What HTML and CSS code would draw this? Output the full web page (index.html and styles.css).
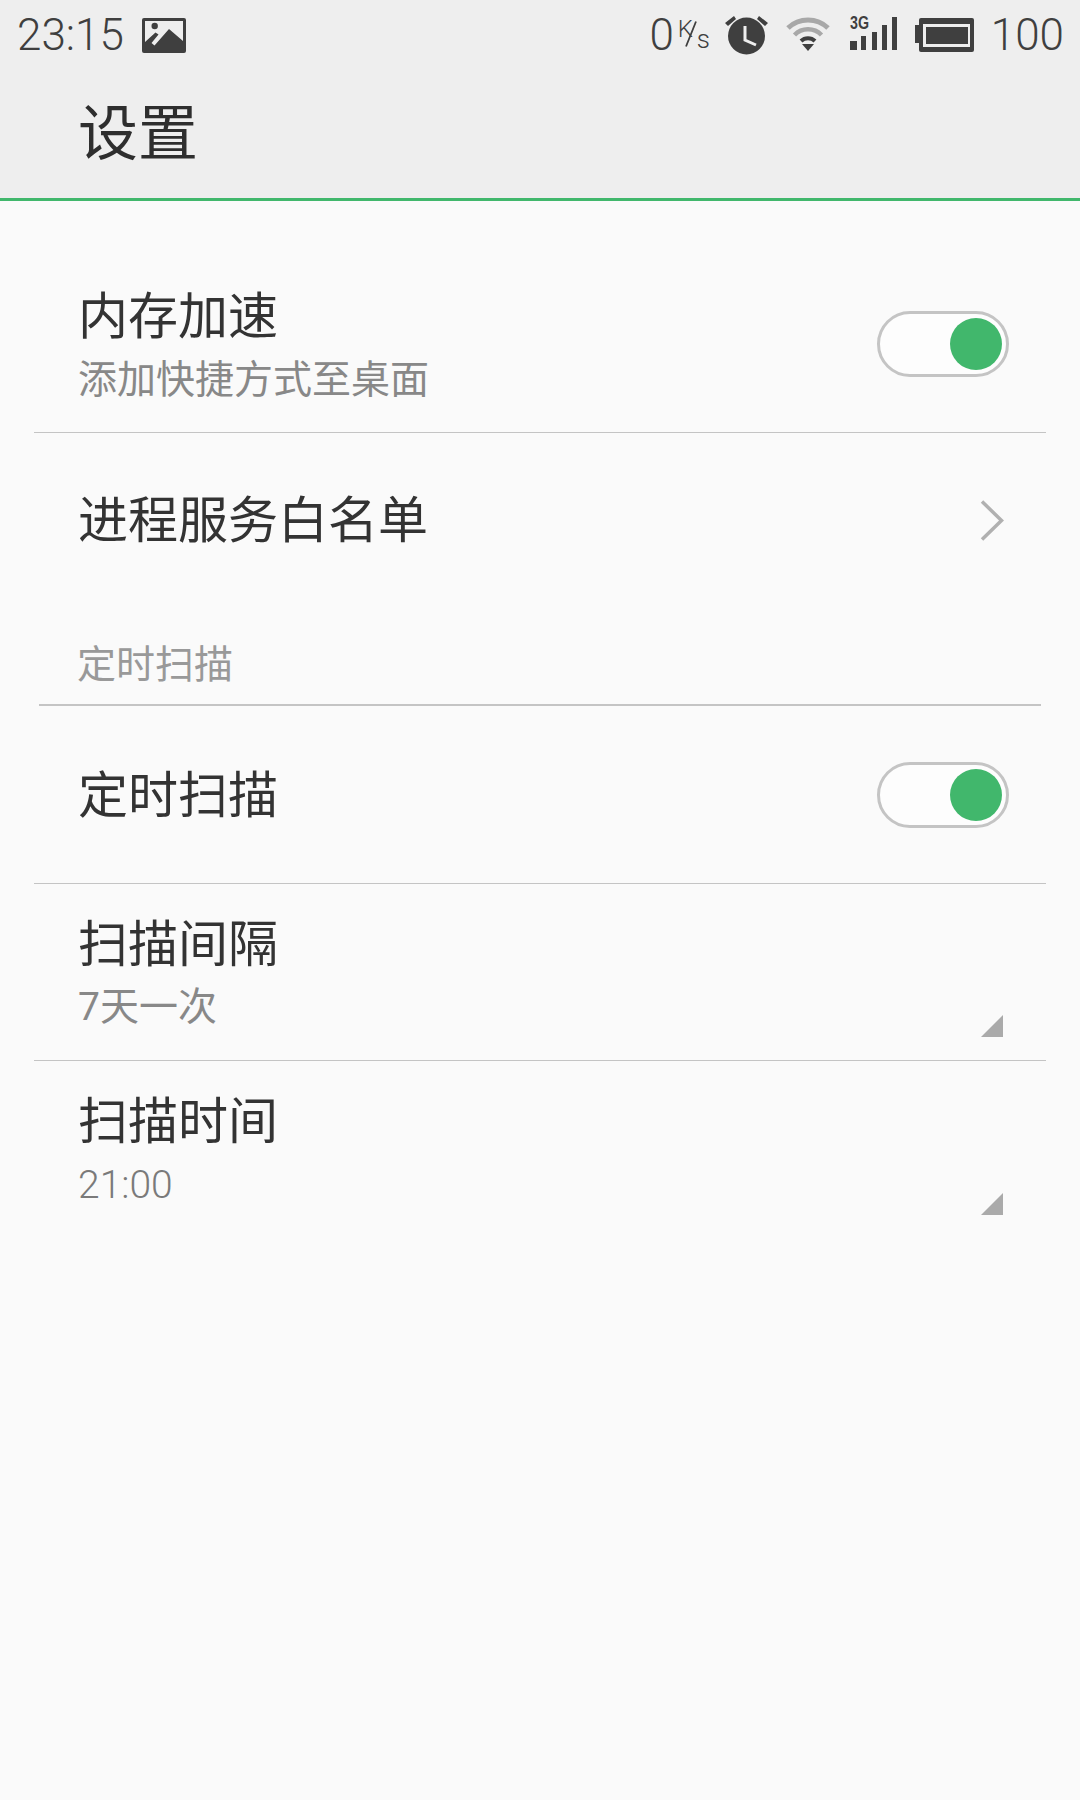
FILE: index.html
```html
<!DOCTYPE html>
<html lang="zh-CN">
<head>
<meta charset="utf-8">
<title>设置</title>
<link rel="stylesheet" href="styles.css">
</head>
<body>
<header class="appbar">
  <div class="status">
    <div class="status-left">
      <span class="clock">23:15</span>
      <svg class="ic-image" viewBox="0 0 44 35"><path fill="#3f3f3f" fill-rule="evenodd" d="M2 0h40a2 2 0 0 1 2 2v31a2 2 0 0 1-2 2H2a2 2 0 0 1-2-2V2a2 2 0 0 1 2-2zM3 3V24L13.500 14.500L16.500 16.500L9.500 25L12.500 27.500L27 11L41 23V3z"/><circle cx="12.700" cy="8" r="3.200" fill="#3f3f3f"/></svg>
    </div>
    <div class="status-right">
      <span class="num net">0</span>
      <span class="speed"><span class="sp-k">K</span><svg class="sp-slash" viewBox="0 0 12 26"><path d="M1 25.500 11 .5" stroke="#3f3f3f" stroke-width="1.800" fill="none"/></svg><span class="sp-s">s</span></span>
      <svg class="ic-alarm" viewBox="0 0 44 40"><circle cx="21.500" cy="21" r="18.500" fill="#3f3f3f"/><path d="M20 11V25L31 30" fill="none" stroke="#eee" stroke-width="3"/><path d="M0 8 9 1l2 3-8 7zM43 8 34 1l-2 3 8 7z" fill="#3f3f3f"/></svg>
      <svg class="ic-wifi" viewBox="0 0 44 35"><path d="M2 11a29 29 0 0 1 40 0" fill="none" stroke="#a8a8a8" stroke-width="5"/><path d="M8.500 18a19 19 0 0 1 27 0" fill="none" stroke="#a8a8a8" stroke-width="4.500"/><path d="M15 24a10 10 0 0 1 14 0" fill="none" stroke="#3f3f3f" stroke-width="4"/><path d="M16 27h12l-6 7z" fill="#3f3f3f"/></svg>
      <svg class="ic-signal" viewBox="0 0 47 35"><text x="0" y="14" class="sig-text" textLength="19" lengthAdjust="spacingAndGlyphs">3G</text><path fill="#3f3f3f" d="M0 26h7v9H0zM11 21h5v14h-5zM22 17h5v18h-5zM32 10h5v25h-5zM42 2h5v33h-5z"/></svg>
      <svg class="ic-battery" viewBox="0 0 59 34"><path fill="#3f3f3f" d="M0 7h4v18H0z"/><rect x="4" y="0" width="55" height="34" rx="2" fill="#3f3f3f"/><rect x="8" y="6" width="47" height="23" fill="#eee"/><rect x="11" y="9" width="42" height="17" fill="#3f3f3f"/></svg>
      <span class="num pct">100</span>
    </div>
  </div>
  <h1 class="title">设置</h1>
</header>

<main class="list">
  <section class="row row-first">
    <div class="text">
      <div class="name">内存加速</div>
      <div class="sub">添加快捷方式至桌面</div>
    </div>
    <span class="toggle"><span class="knob"></span></span>
  </section>
  <section class="row row-link">
    <div class="text"><div class="name">进程服务白名单</div></div>
    <svg class="chevron" viewBox="0 0 24 41"><path d="M2 1.500 21.500 20.500 2 39.500" fill="none" stroke="#b0b0b0" stroke-width="3.500"/></svg>
  </section>
  <div class="group-label">定时扫描</div>
  <section class="row row-center">
    <div class="text"><div class="name">定时扫描</div></div>
    <span class="toggle"><span class="knob"></span></span>
  </section>
  <section class="row">
    <div class="text">
      <div class="name">扫描间隔</div>
      <div class="sub">7天一次</div>
    </div>
    <svg class="corner" viewBox="0 0 22 22"><path d="M22 0v22H0z" fill="#aaa"/></svg>
  </section>
  <section class="row row-last">
    <div class="text">
      <div class="name">扫描时间</div>
      <div class="sub sub-num">21:00</div>
    </div>
    <svg class="corner" viewBox="0 0 22 22"><path d="M22 0v22H0z" fill="#aaa"/></svg>
  </section>
</main>
</body>
</html>
```

FILE: styles.css
```css
* { box-sizing: border-box; }
html, body { margin: 0; padding: 0; }
body {
  width: 1080px;
  min-height: 1800px;
  background: #fafafa;
  font-family: Roboto, "Noto Sans CJK SC", sans-serif;
  color: #333;
}
.appbar {
  height: 201px;
  background: #eee;
  border-bottom: 3px solid #41b76c;
}
.status {
  height: 70px;
  display: flex;
  justify-content: space-between;
  align-items: center;
  padding: 0 16px 0 17px;
}
.status-left, .status-right { display: flex; align-items: center; }
.clock, .num {
  font-size: 44px;
  font-weight: 300;
  color: #3f3f3f;
  line-height: 52px;
}
.ic-image { width: 44px; height: 35px; margin-left: 18px; }
.speed {
  display: flex;
  width: 31px;
  height: 32px;
  margin: 0 0 2px 4px;
  font-weight: 300;
  color: #3f3f3f;
}
.sp-k { align-self: flex-start; font-size: 24px; line-height: 22px; width: 14px; }
.sp-slash { align-self: center; width: 12px; height: 26px; margin-left: -7px; flex: none; }
.sp-s { align-self: flex-end; font-size: 26px; line-height: 22px; width: 12px; }
.ic-alarm { width: 44px; height: 40px; margin-left: 16px; }
.ic-wifi { width: 44px; height: 35px; margin: 0 0 2px 17px; }
.ic-signal { width: 47px; height: 35px; margin: 0 0 5px 20px; overflow: visible; }
.sig-text { font-family: "Liberation Sans", sans-serif; font-size: 19px; font-weight: 700; fill: #3f3f3f; }
.ic-battery { width: 59px; height: 34px; margin-left: 18px; }
.pct { margin-left: 17px; }
.title {
  margin: 0;
  padding: 14px 0 0 78px;
  font-size: 60px;
  font-weight: 400;
  line-height: 90px;
  font-family: "Noto Sans CJK SC", sans-serif;
  color: #2e2e2e;
}
.list { display: flex; flex-direction: column; }
.row {
  height: 177px;
  margin: 0 34px;
  padding: 0 37px 0 44px;
  display: flex;
  justify-content: space-between;
  border-bottom: 1px solid #c4c4c4;
}
.row-first { height: 232px; padding-top: 55px; align-items: center; }
.row-first .text { align-self: flex-start; }
.row-first .sub, .row-last .sub { margin-top: 6px; }
.row-link { height: 174px; align-items: center; border-bottom: 0; }
.row-center { height: 178px; align-items: center; }
.row-last { border-bottom: 0; }
.text { padding-top: 23px; }
.row-link .text, .row-center .text { padding: 0 0 8px; }
.name {
  font-family: "Noto Sans CJK SC", sans-serif;
  font-size: 50px;
  line-height: 66px;
  color: #333;
}
.sub {
  margin-top: 5px;
  font-size: 39px;
  font-weight: 400;
  line-height: 58px;
  color: #888;
}
.sub-num { font-weight: 300; color: #7a7a7a; }
.toggle {
  width: 132px;
  height: 66px;
  flex: none;
  padding: 4px;
  border: 3px solid #c4c4c4;
  border-radius: 33px;
  background: #fdfdfd;
  display: flex;
  justify-content: flex-end;
}
.knob {
  width: 52px;
  height: 52px;
  border-radius: 50%;
  background: #41b76c;
}
.chevron { width: 24px; height: 41px; margin-right: 5px; }
.corner { width: 22px; height: 22px; align-self: flex-end; margin: 0 6px 23px 0; }
.group-label {
  height: 99px;
  margin: 0 39px;
  padding: 32px 0 0 38px;
  font-size: 39px;
  line-height: 44px;
  font-weight: 400;
  color: #999;
  border-bottom: 2px solid #c4c4c4;
  font-family: "Noto Sans CJK SC", sans-serif;
}
```
